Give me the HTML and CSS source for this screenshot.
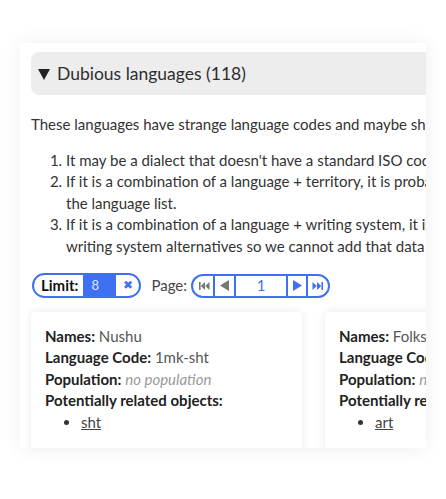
FILE: index.html
```html
<!DOCTYPE html>
<html>
<head>
<meta charset="utf-8">
<link rel="stylesheet" href="styles.css">
</head>
<body>
<div class="panel">
  <div class="content">
    <div class="summary"><span class="tri"></span>Dubious languages (118)</div>
    <p class="intro">These languages have strange language codes and maybe should be reviewed by a specialist.</p>
    <ol class="reasons">
      <li>It may be a dialect that doesn't have a standard ISO code and so it was given a custom code.</li>
      <li>If it is a combination of a language + territory, it is probably a locale and should be moved from<br>the language list.</li>
      <li>If it is a combination of a language + writing system, it is a valid locale but we do not have the<br>writing system alternatives so we cannot add that data yet.</li>
    </ol>
    <div class="controls">
      <div class="limit">
        <span class="limit-label">Limit:</span>
        <span class="limit-value">8</span>
        <span class="limit-clear">&#10006;</span>
      </div>
      <span class="page-label">Page:</span>
      <div class="pager">
        <span class="seg seg-first off"><svg width="11" height="8" viewBox="0 0 11 8"><rect x="0" y="0" width="1.6" height="8"/><polygon points="6,0 6,8 1.8,4"/><polygon points="10.5,0 10.5,8 6.3,4"/></svg></span>
        <span class="seg seg-prev off"><svg width="9" height="11" viewBox="0 0 9 11"><polygon points="9,0 9,11 0,5.5"/></svg></span>
        <span class="seg seg-num">1</span>
        <span class="seg seg-next"><svg width="9" height="11" viewBox="0 0 9 11"><polygon points="0,0 0,11 9,5.5"/></svg></span>
        <span class="seg seg-last"><svg width="11" height="8" viewBox="0 0 11 8"><polygon points="0.5,0 0.5,8 4.7,4"/><polygon points="5,0 5,8 9.2,4"/><rect x="9.4" y="0" width="1.6" height="8"/></svg></span>
      </div>
    </div>
    <div class="cards">
      <div class="card">
        <div><b>Names:</b> <span class="val">Nushu</span></div>
        <div><b>Language Code:</b> <span class="val">1mk-sht</span></div>
        <div><b>Population:</b> <span class="none">no population</span></div>
        <div><b>Potentially related objects:</b></div>
        <ul class="related"><li><a href="#">sht</a></li></ul>
      </div>
      <div class="card">
        <div><b>Names:</b> <span class="val">Folkscript</span></div>
        <div><b>Language Code:</b> <span class="val">1mk-art</span></div>
        <div><b>Population:</b> <span class="none">no population</span></div>
        <div><b>Potentially related objects:</b></div>
        <ul class="related"><li><a href="#">art</a></li></ul>
      </div>
    </div>
  </div>
</div>
</body>
</html>
```
FILE: styles.css
```css
html, body {
  margin: 0;
  padding: 0;
  background: #ffffff;
}
body {
  font-family: Lato, "Open Sans", sans-serif;
  color: #333333;
  width: 446px;
  height: 499px;
  overflow: hidden;
}
.panel {
  margin: 43px 0 0 20px;
  width: 406px;
  height: 405px;
  overflow: hidden;
  background: #ffffff;
  box-shadow: 0 0 18px rgba(0, 0, 0, 0.07);
}
.content {
  width: 720px;
  padding: 9px 11px;
  font-size: 15px;
  line-height: 21.6px;
}
.summary {
  height: 43px;
  background: #ededed;
  border-radius: 8px;
  display: flex;
  align-items: center;
  padding-left: 7px;
  font-size: 17.5px;
  color: #2e2e2e;
}
.tri {
  width: 0;
  height: 0;
  border-left: 6px solid transparent;
  border-right: 6px solid transparent;
  border-top: 11px solid #222;
  margin-right: 7px;
  margin-top: 1px;
}
.intro {
  margin: 19px 0 0;
  white-space: nowrap;
}
.reasons {
  margin: 14px 0 0;
  padding-left: 35px;
  white-space: nowrap;
}
.controls {
  margin-top: 15px;
  display: flex;
  align-items: center;
  height: 26px;
}
.limit {
  display: flex;
  align-items: stretch;
  height: 25px;
  box-sizing: border-box;
  border: 2px solid #3f70f2;
  border-radius: 13px;
  overflow: hidden;
  margin-left: 1px;
}
.limit-label {
  font-weight: bold;
  color: #111;
  padding: 0 5px 0 7px;
  display: flex;
  align-items: center;
}
.limit-value {
  background: #3f70f2;
  color: #dfe7ff;
  width: 33px;
  font-size: 13px;
  padding-left: 8px;
  box-sizing: border-box;
  display: flex;
  align-items: center;
}
.limit-clear {
  color: #3f70f2;
  width: 23px;
  font-size: 12px;
  display: flex;
  align-items: center;
  justify-content: center;
  font-family: "DejaVu Sans", sans-serif;
}
.page-label {
  margin-left: 10px;
  color: #444;
}
.pager {
  margin-left: 4px;
  display: flex;
  height: 24px;
  box-sizing: border-box;
  border: 2px solid #3f70f2;
  border-radius: 12px;
  overflow: hidden;
}
.seg {
  display: flex;
  align-items: center;
  justify-content: center;
  border-left: 2px solid #3f70f2;
  fill: #3f70f2;
}
.seg.off { fill: #777; }
.seg-first { border-left: none; width: 20px; padding-left: 2px; box-sizing: border-box; }
.seg-prev { width: 19px; }
.seg-num { width: 50px; color: #3f70f2; font-size: 15px; }
.seg-next { width: 18px; }
.seg-last { width: 22px; padding-right: 2px; box-sizing: border-box; }
.cards {
  margin-top: 13px;
  display: flex;
  gap: 23px;
}
.card {
  width: 271px;
  flex: none;
  box-sizing: border-box;
  background: #fff;
  border-radius: 4px;
  box-shadow: 0 0 10px rgba(0, 0, 0, 0.09);
  padding: 14px 14px 20px;
  white-space: nowrap;
}
.card b { color: #222; }
.val { color: #555; }
.none { color: #999; font-style: italic; }
.related {
  margin: 0;
  padding-left: 36px;
}
.related a { color: #444; }
```
